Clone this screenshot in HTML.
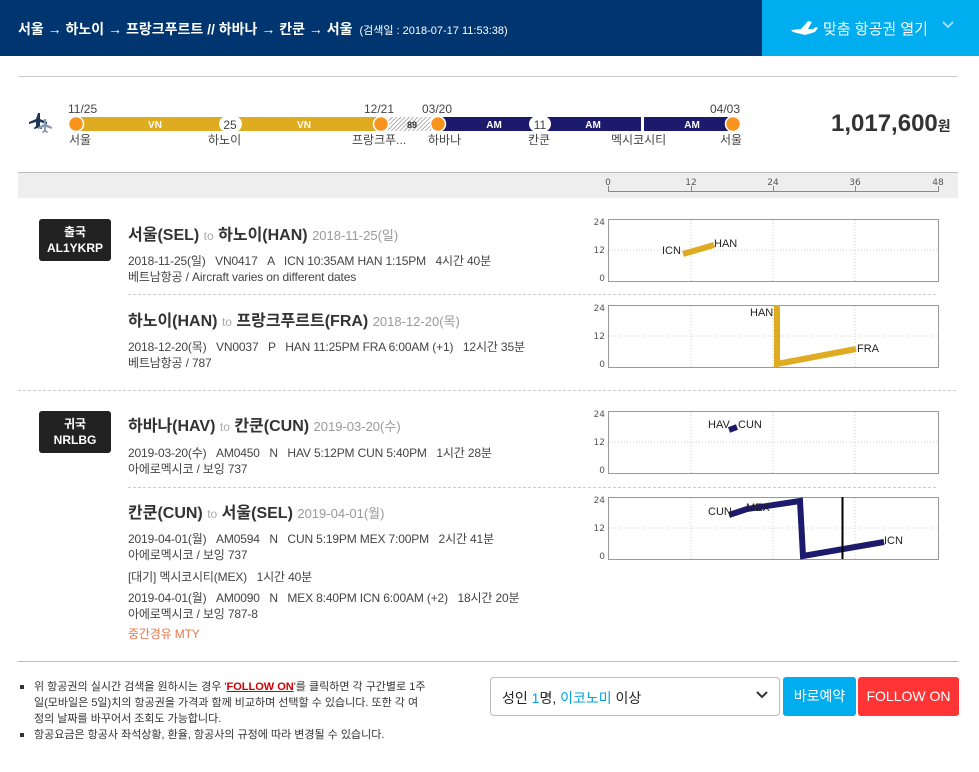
<!DOCTYPE html>
<html><head><meta charset="utf-8"><style>
*{margin:0;padding:0;box-sizing:border-box}
body{width:979px;height:772px;position:relative;background:#fff;font-family:"Liberation Sans","Noto Sans CJK KR",sans-serif;color:#333;overflow:hidden}
.a{position:absolute;white-space:nowrap}
.hd{left:0;top:0;width:979px;height:56px;background:#01356f}
.hb{left:762px;top:0;width:217px;height:56px;background:#00adef}
.t{font-size:16px;font-weight:bold;color:#333}
.t .s{font-size:12px;font-weight:normal;color:#aaa}
.t .d{font-size:13px;font-weight:normal;color:#999}
.d12{font-size:12px;color:#444;letter-spacing:-0.15px}
.badge{background:#222;color:#fff;font-size:12px;font-weight:bold;text-align:center;border-radius:3px;width:72px;height:42px;line-height:16px;padding-top:5px}
.n{font-size:11px;color:#333}
.lab{font-size:12px;color:#444}
</style></head><body>
<div class="a hd"></div>
<div class="a" style="left:18px;top:19px;color:#fff;font-size:14px;font-weight:bold">서울 → 하노이 → 프랑크푸르트 // 하바나 → 칸쿤 → 서울 <span style="font-size:11px;font-weight:normal">&nbsp;(검색일 : 2018-07-17 11:53:38)</span></div>
<div class="a hb"></div>
<div class="a" style="left:823px;top:18px;color:#fff;font-size:15px">맞춤 항공권 열기</div>

<svg class="a" style="left:0;top:0" width="979" height="772">
<line x1="18" y1="76.5" x2="958" y2="76.5" stroke="#ccc"/>
<g fill="#1d3557"><path d="M38 113 l2 0 l0 6 l7 3 l0 2 l-7 -2 l0 4 l2 2 l0 1 l-4 -1 l-4 1 l0 -1 l2 -2 l0 -4 l-7 2 l0 -2 l7 -3 z"/></g>
<g fill="#8a98ad"><path d="M44 119 l2 0 l0 5 l6 3 l0 2 l-6 -2 l0 3 l2 2 l0 1 l-3 -1 l-3 1 l0 -1 l2 -2 l0 -3 l-6 2 l0 -2 l6 -3 z"/></g>
<defs><pattern id="h" width="3" height="3" patternUnits="userSpaceOnUse" patternTransform="rotate(45)"><rect width="3" height="3" fill="#fff"/><line x1="0" y1="0" x2="0" y2="3" stroke="#666" stroke-width="1"/></pattern></defs>
<rect x="76" y="117" width="305" height="14" fill="#dfab21"/>
<rect x="388" y="117" width="46" height="14" fill="url(#h)"/>
<rect x="438" y="117" width="203" height="14" fill="#1c1a6c"/>
<rect x="644" y="117" width="89" height="14" fill="#1c1a6c"/>
<rect x="219" y="116" width="23" height="16" rx="8" fill="#fff"/>
<rect x="529" y="116" width="22" height="16" rx="8" fill="#fff"/>
<g fill="#f7941d" stroke="#fff" stroke-width="1.5"><circle cx="76" cy="124" r="7.5"/><circle cx="381" cy="124" r="7.5"/><circle cx="438" cy="124" r="7.5"/><circle cx="733" cy="124" r="7.5"/></g>
<g font-size="10" font-weight="bold" fill="#fff" font-family="Liberation Sans,sans-serif" text-anchor="middle"><text x="155" y="128">VN</text><text x="304" y="128">VN</text><text x="494" y="128">AM</text><text x="593" y="128">AM</text><text x="692" y="128">AM</text></g>
<text x="412" y="128" font-size="9" font-weight="bold" fill="#333" text-anchor="middle" font-family="Liberation Sans">89</text>
<g font-size="12" fill="#444" font-family="Liberation Sans" text-anchor="middle"><text x="230" y="129">25</text><text x="540" y="129">11</text></g>
<rect x="18" y="172" width="940" height="26" fill="#eee"/>
<line x1="18" y1="172.5" x2="958" y2="172.5" stroke="#bbb"/>
<g stroke="#888" fill="none"><path d="M608.5 186v5.5h330v-5.5M691.5 186v5M773.5 186v5M855.5 186v5"/></g>
<g font-size="9" fill="#555" font-family="DejaVu Sans,sans-serif" text-anchor="middle"><text x="608" y="185">0</text><text x="691" y="185">12</text><text x="773" y="185">24</text><text x="855" y="185">36</text><text x="938" y="185">48</text></g>
<g stroke="#ccc" stroke-dasharray="3,2"><line x1="128" y1="294.5" x2="938" y2="294.5"/><line x1="18" y1="390.5" x2="958" y2="390.5"/><line x1="128" y1="487.5" x2="938" y2="487.5"/></g>
<line x1="18" y1="661.5" x2="958" y2="661.5" stroke="#bbb"/>
<g>
<g transform="translate(0,219)"><rect x="608.5" y="0.5" width="330" height="62" fill="#fff" stroke="#999"/><g stroke="#ccc" stroke-dasharray="1,2"><line x1="691" y1="1" x2="691" y2="62"/><line x1="773" y1="1" x2="773" y2="62"/><line x1="855" y1="1" x2="855" y2="62"/><line x1="609" y1="31" x2="938" y2="31"/></g><g font-size="9" fill="#555" font-family="DejaVu Sans,sans-serif" text-anchor="end"><text x="605" y="6">24</text><text x="605" y="34">12</text><text x="605" y="62">0</text></g></g>
<g transform="translate(0,305)"><rect x="608.5" y="0.5" width="330" height="62" fill="#fff" stroke="#999"/><g stroke="#ccc" stroke-dasharray="1,2"><line x1="691" y1="1" x2="691" y2="62"/><line x1="773" y1="1" x2="773" y2="62"/><line x1="855" y1="1" x2="855" y2="62"/><line x1="609" y1="31" x2="938" y2="31"/></g><g font-size="9" fill="#555" font-family="DejaVu Sans,sans-serif" text-anchor="end"><text x="605" y="6">24</text><text x="605" y="34">12</text><text x="605" y="62">0</text></g></g>
<g transform="translate(0,411)"><rect x="608.5" y="0.5" width="330" height="62" fill="#fff" stroke="#999"/><g stroke="#ccc" stroke-dasharray="1,2"><line x1="691" y1="1" x2="691" y2="62"/><line x1="773" y1="1" x2="773" y2="62"/><line x1="855" y1="1" x2="855" y2="62"/><line x1="609" y1="31" x2="938" y2="31"/></g><g font-size="9" fill="#555" font-family="DejaVu Sans,sans-serif" text-anchor="end"><text x="605" y="6">24</text><text x="605" y="34">12</text><text x="605" y="62">0</text></g></g>
<g transform="translate(0,497)"><rect x="608.5" y="0.5" width="330" height="62" fill="#fff" stroke="#999"/><g stroke="#ccc" stroke-dasharray="1,2"><line x1="691" y1="1" x2="691" y2="62"/><line x1="773" y1="1" x2="773" y2="62"/><line x1="855" y1="1" x2="855" y2="62"/><line x1="609" y1="31" x2="938" y2="31"/></g><g font-size="9" fill="#555" font-family="DejaVu Sans,sans-serif" text-anchor="end"><text x="605" y="6">24</text><text x="605" y="34">12</text><text x="605" y="62">0</text></g></g>
</g>
<g stroke="#dfab21" stroke-width="6" fill="none"><line x1="683" y1="254" x2="714" y2="245"/><path d="M777 305V364L856 349"/></g>
<g stroke="#1c1a6c" stroke-width="6" fill="none"><line x1="729" y1="430" x2="737" y2="427"/><path d="M729 515L747 509 L800 501 L803 556 L884 542"/></g>
<line x1="842.5" y1="497" x2="842.5" y2="559" stroke="#000" stroke-width="2"/>
<g font-size="11" fill="#222" font-family="Liberation Sans,sans-serif"><text x="662" y="254">ICN</text><text x="714" y="247">HAN</text><text x="750" y="316">HAN</text><text x="857" y="352">FRA</text><text x="708" y="428">HAV</text><text x="738" y="428">CUN</text><text x="708" y="515">CUN</text><text x="746" y="511">MEX</text><text x="884" y="544">ICN</text></g>
<path d="M757 692l5 5 5-5" stroke="#333" stroke-width="2" fill="none"/>
<path d="M943 22l5 5 5-5" stroke="#9fdcf7" stroke-width="2" fill="none"/>
<path d="M791 30l10-1 7-8 4 1-4 7 5 0 3-2 2 1-3 4-10 3-12 -3z" fill="#fff"/>
</svg>

<div class="a lab" style="left:68px;top:102px">11/25</div>
<div class="a lab" style="left:364px;top:102px">12/21</div>
<div class="a lab" style="left:422px;top:102px">03/20</div>
<div class="a lab" style="left:710px;top:102px">04/03</div>
<div class="a lab" style="left:69px;top:131px">서울</div>
<div class="a lab" style="left:208px;top:131px">하노이</div>
<div class="a lab" style="left:352px;top:131px">프랑크푸...</div>
<div class="a lab" style="left:428px;top:131px">하바나</div>
<div class="a lab" style="left:528px;top:131px">칸쿤</div>
<div class="a lab" style="left:611px;top:131px">멕시코시티</div>
<div class="a lab" style="left:720px;top:131px">서울</div>
<div class="a" style="left:831px;top:110px;font-size:24px;font-weight:bold;color:#333">1,017,600<span style="font-size:14px">원</span></div>

<div class="a badge" style="left:39px;top:219px">출국<br>AL1YKRP</div>
<div class="a t" style="left:128px;top:221px">서울(SEL) <span class="s">to</span> 하노이(HAN) <span class="d">2018-11-25(일)</span></div>
<div class="a d12" style="left:128px;top:252px">2018-11-25(일)&nbsp;&nbsp; VN0417 &nbsp;&nbsp;A &nbsp;&nbsp;ICN 10:35AM HAN 1:15PM &nbsp;&nbsp;4시간 40분</div>
<div class="a d12" style="left:128px;top:268px">베트남항공 / Aircraft varies on different dates</div>
<div class="a t" style="left:128px;top:307px">하노이(HAN) <span class="s">to</span> 프랑크푸르트(FRA) <span class="d">2018-12-20(목)</span></div>
<div class="a d12" style="left:128px;top:338px">2018-12-20(목)&nbsp;&nbsp; VN0037 &nbsp;&nbsp;P &nbsp;&nbsp;HAN 11:25PM FRA 6:00AM (+1) &nbsp;&nbsp;12시간 35분</div>
<div class="a d12" style="left:128px;top:354px">베트남항공 / 787</div>

<div class="a badge" style="left:39px;top:411px">귀국<br>NRLBG</div>
<div class="a t" style="left:128px;top:412px">하바나(HAV) <span class="s">to</span> 칸쿤(CUN) <span class="d">2019-03-20(수)</span></div>
<div class="a d12" style="left:128px;top:444px">2019-03-20(수)&nbsp;&nbsp; AM0450 &nbsp;&nbsp;N &nbsp;&nbsp;HAV 5:12PM CUN 5:40PM &nbsp;&nbsp;1시간 28분</div>
<div class="a d12" style="left:128px;top:460px">아에로멕시코 / 보잉 737</div>
<div class="a t" style="left:128px;top:499px">칸쿤(CUN) <span class="s">to</span> 서울(SEL) <span class="d">2019-04-01(월)</span></div>
<div class="a d12" style="left:128px;top:530px">2019-04-01(월)&nbsp;&nbsp; AM0594 &nbsp;&nbsp;N &nbsp;&nbsp;CUN 5:19PM MEX 7:00PM &nbsp;&nbsp;2시간 41분</div>
<div class="a d12" style="left:128px;top:546px">아에로멕시코 / 보잉 737</div>
<div class="a d12" style="left:128px;top:568px">[대기] 멕시코시티(MEX) &nbsp;&nbsp;1시간 40분</div>
<div class="a d12" style="left:128px;top:589px">2019-04-01(월)&nbsp;&nbsp; AM0090 &nbsp;&nbsp;N &nbsp;&nbsp;MEX 8:40PM ICN 6:00AM (+2) &nbsp;&nbsp;18시간 20분</div>
<div class="a d12" style="left:128px;top:605px">아에로멕시코 / 보잉 787-8</div>
<div class="a d12" style="left:128px;top:625px;color:#e8774a">중간경유 MTY</div>

<div class="a n" style="left:20px;top:679px;line-height:16px">
<div style="position:relative;padding-left:14px"><span style="position:absolute;left:0;top:6px;width:4px;height:4px;background:#333"></span>위 항공권의 실시간 검색을 원하시는 경우 '<b style="color:#c00;text-decoration:underline">FOLLOW ON</b>'를 클릭하면 각 구간별로 1주<br>일(모바일은 5일)치의 항공권을 가격과 함께 비교하며 선택할 수 있습니다. 또한 각 여<br>정의 날짜를 바꾸어서 조회도 가능합니다.</div>
<div style="position:relative;padding-left:14px"><span style="position:absolute;left:0;top:6px;width:4px;height:4px;background:#333"></span>항공요금은 항공사 좌석상황, 환율, 항공사의 규정에 따라 변경될 수 있습니다.</div>
</div>
<div class="a" style="left:490px;top:677px;width:290px;height:39px;border:1px solid #bbb;border-radius:4px"></div>
<div class="a" style="left:502px;top:688px;font-size:14px;color:#222">성인 <span style="color:#00a0e0">1</span>명, <span style="color:#00a0e0">이코노미</span> 이상</div>
<div class="a" style="left:783px;top:677px;width:73px;height:39px;background:#00adef;border-radius:3px;color:#fff;font-size:14px;text-align:center;line-height:39px">바로예약</div>
<div class="a" style="left:858px;top:677px;width:101px;height:39px;background:#ff3434;border-radius:3px;color:#fff;font-size:14px;text-align:center;line-height:39px">FOLLOW ON</div>
</body></html>
